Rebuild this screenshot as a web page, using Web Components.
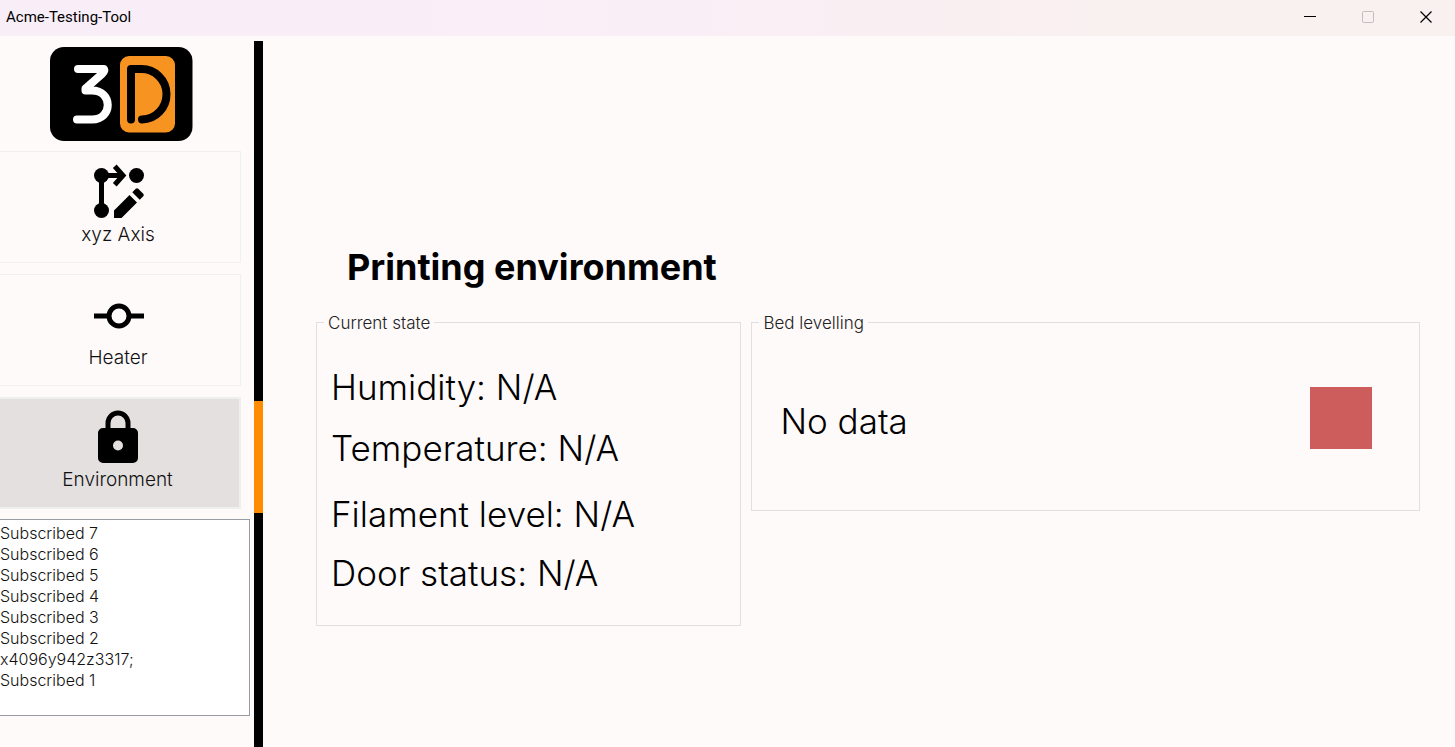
<!DOCTYPE html>
<html lang="en">
<head>
<meta charset="utf-8">
<title>Acme-Testing-Tool</title>
<style>
  html, body { margin: 0; height: 100%; }
  body { background: #fffafa; color: #000; font-family: Inter, sans-serif; }
</style>
</head>
<body>
<acme-app></acme-app>

<script>
const define = (name, html, setup) => {
  const template = document.createElement('template');
  template.innerHTML = html;
  customElements.define(name, class extends HTMLElement {
    constructor() {
      super();
      this.attachShadow({ mode: 'open' }).append(template.content.cloneNode(true));
    }
    connectedCallback() { if (setup) setup(this, this.shadowRoot); }
  });
};

define('title-bar', `
  <style>
    :host { display: flex; align-items: center; height: 34px; padding: 0 0 2px 6px;
      background: linear-gradient(90deg, #f8eef7, #faeef8 35%, #f9f0f0 75%); }
    h1 { flex: 1; margin: 0; font: 400 15px/20px Roboto, sans-serif; }
    button { width: 58px; height: 34px; padding: 0; border: 0; background: none; display: grid; place-items: center; }
    svg { display: block; fill: none; stroke: #000; }
  </style>
  <h1><slot></slot></h1>
  <button type="button" aria-label="Minimize"><svg width="14" height="14"><path d="M1 6.5h12"/></svg></button>
  <button type="button" aria-label="Maximize" disabled><svg width="14" height="14"><rect x="1.5" y="1.5" width="11" height="11" rx="1" stroke="#c4bcbc"/></svg></button>
  <button type="button" aria-label="Close"><svg width="14" height="14"><path d="M1.5 1.5l11 11M12.5 1.5l-11 11" stroke-width="1.2"/></svg></button>
`);

define('brand-logo', `
  <style>
    :host { display: block; }
    svg { display: block; margin: 0 auto; }
  </style>
  <svg width="143" height="94" viewBox="0 0 143 94" role="img" aria-label="3D">
    <rect width="142.500" height="94" rx="14"/>
    <rect x="70" y="9" width="55" height="76.500" rx="9" fill="#f79421"/>
    <g fill="none" stroke-width="8" stroke-linecap="round" stroke-linejoin="round">
      <path stroke="#fff" d="M28 22H54Q55 24 52 27L35.500 41.500V43.500H42C63 43.500 63 72.500 42 72.500H27"/>
      <path stroke="#000" d="M81 72.500V22H91A25 25.250 0 0 1 92 72.500"/>
    </g>
  </svg>
`);

const icons = {
  axis: `<circle cx="5" cy="5" r="3"/><circle cx="5" cy="19" r="3"/><circle cx="19" cy="5" r="3"/>
    <path d="M5 5V19M5 5H13M10.300 1.300L13.600 5L10.300 8.700" fill="none" stroke="#000" stroke-width="2"/>
    <path d="M10 22V19L16.200 12.800L19.200 15.800L13 22ZM17.300 11.700L18.700 10.300Q19.200 9.800 19.700 10.300L21.700 12.300Q22.200 12.800 21.700 13.300L20.300 14.700Z"/>`,
  heater: `<circle cx="12" cy="12" r="4" fill="none" stroke="#000" stroke-width="2"/><path d="M2 11H7.500V13H2ZM16.500 11H22V13H16.500Z"/>`,
  lock: `<path d="M12 17A2 2 0 0 0 14 15A2 2 0 0 0 12 13A2 2 0 0 0 10 15A2 2 0 0 0 12 17M18 8A2 2 0 0 1 20 10V20A2 2 0 0 1 18 22H6A2 2 0 0 1 4 20V10A2 2 0 0 1 6 8H7V6A5 5 0 0 1 12 1A5 5 0 0 1 17 6V8H18M12 3A3 3 0 0 0 9 6V8H15V6A3 3 0 0 0 12 3Z"/>`
};

define('nav-tile', `
  <style>
    :host { display: block; }
    button { display: flex; flex-direction: column; align-items: center; width: 100%; height: 112px;
      box-sizing: border-box; margin: 0; padding: 11px 4px 0 0; border: 1px solid #f0f0f0; border-left: 0;
      background: none; color: #111; font: 300 19px/24px Inter, sans-serif; }
    :host([active]) button { background: #e4e0e0; border: 2px solid #f0efef; border-left: 0; padding-top: 9px; }
    svg { display: block; margin-left: 1px; }
  </style>
  <button type="button"><svg width="60" height="60" viewBox="0 0 24 24" aria-hidden="true"></svg><slot></slot></button>
`, (host, root) => {
  root.querySelector('svg').innerHTML = icons[host.getAttribute('icon')];
  if (host.hasAttribute('active')) root.querySelector('button').setAttribute('aria-current', 'page');
});

define('message-log', `
  <style>
    :host { display: block; }
    ul { margin: 0; padding: 3px 0 24px; list-style: none; background: #fff;
      border: 1px solid #9a9ca4; border-left: 0; font: 300 16px/21px Inter, sans-serif; color: #111; }
  </style>
  <ul></ul>
`, (host, root) => {
  const ul = root.querySelector('ul');
  for (const text of host.getAttribute('lines').split('|')) {
    const li = document.createElement('li');
    li.textContent = text;
    ul.append(li);
  }
});

define('side-rail', `
  <style>
    :host { display: flow-root; width: 9px; margin-top: 5px; background: #000; }
    div { height: 112px; margin-top: 360px; background: #ff8c00; }
  </style>
  <div></div>
`);

define('group-box', `
  <style>
    :host { display: block; }
    fieldset { margin: 0; padding: 0; min-width: 0; border: 1px solid #e0e0e0; }
    legend { margin-left: 7px; padding: 1px 4px 0; font: 300 17px/20px Inter, sans-serif; color: #222; }
  </style>
  <fieldset><legend></legend><slot></slot></fieldset>
`, (host, root) => { root.querySelector('legend').textContent = host.getAttribute('label'); });

define('environment-page', `
  <style>
    :host { display: block; padding: 206px 35px 0 53px; }
    h2 { margin: 0 0 20px 31px; font: 700 36px/50px Inter, sans-serif; }
    .panels { display: grid; grid-template-columns: 7fr 11fr; gap: 10px; align-items: start; }
    .readings { display: grid; grid-template-rows: 76px 61px 66px 59px; align-items: end;
      padding: 0 14px 30px; }
    p { margin: 0; font: 300 35px/44px Inter, sans-serif; }
    .level { display: flex; justify-content: space-between; align-items: center; height: 177px; padding: 0 47px 0 28px; }
    .level p { padding-bottom: 2px; }
    .status { width: 62px; height: 62px; margin-bottom: 8px; background: #cd5c5c; }
  </style>
  <h2>Printing environment</h2>
  <div class="panels">
    <group-box label="Current state">
      <div class="readings">
        <p>Humidity: N/A</p><p>Temperature: N/A</p><p>Filament level: N/A</p><p>Door status: N/A</p>
      </div>
    </group-box>
    <group-box label="Bed levelling">
      <div class="level"><p>No data</p><div class="status"></div></div>
    </group-box>
  </div>
`);

define('acme-app', `
  <style>
    :host { display: flex; flex-direction: column; min-height: 100vh; }
    .body { flex: 1; display: flex; }
    aside { width: 250px; margin-right: 4px; }
    brand-logo { width: 242px; padding: 11px 0 10px; }
    nav { display: flex; flex-direction: column; gap: 11px; width: 241px; margin-bottom: 10px; }
    environment-page { flex: 1; min-width: 0; }
  </style>
  <title-bar>Acme-Testing-Tool</title-bar>
  <div class="body">
    <aside>
      <brand-logo></brand-logo>
      <nav>
        <nav-tile icon="axis">xyz Axis</nav-tile>
        <nav-tile icon="heater">Heater</nav-tile>
        <nav-tile icon="lock" active>Environment</nav-tile>
      </nav>
      <message-log lines="Subscribed 7|Subscribed 6|Subscribed 5|Subscribed 4|Subscribed 3|Subscribed 2|x4096y942z3317;|Subscribed 1"></message-log>
    </aside>
    <side-rail></side-rail>
    <environment-page></environment-page>
  </div>
`);
</script>
</body>
</html>
